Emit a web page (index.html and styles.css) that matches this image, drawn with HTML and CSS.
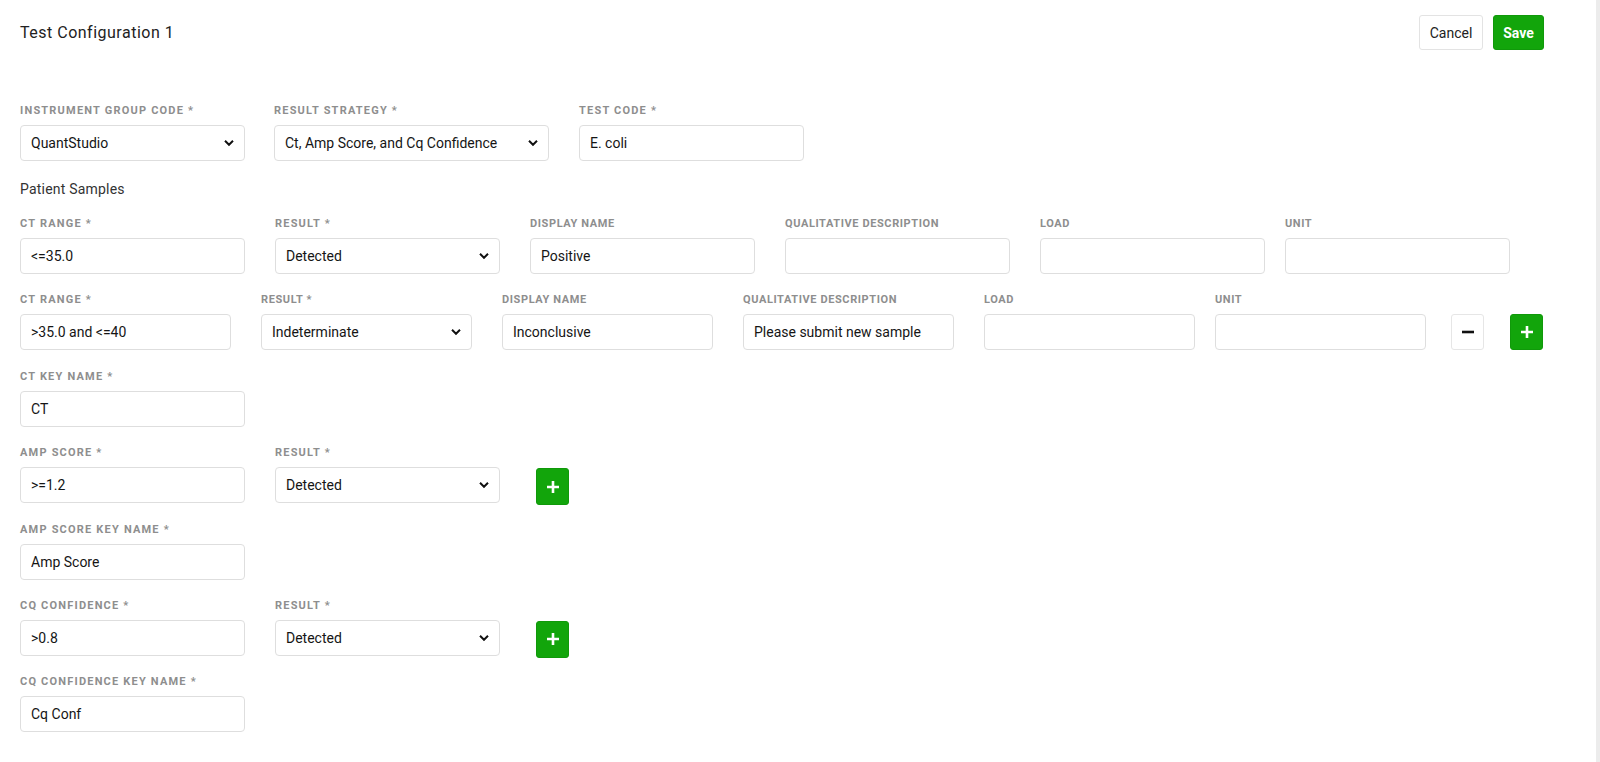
FILE: index.html
```html
<!DOCTYPE html>
<html lang="en">
<head>
    <meta charset="UTF-8">
    <meta name="viewport" content="width=device-width, initial-scale=1.0">
    <title>Test Configuration 1</title>
    <link rel="stylesheet" href="styles.css">
</head>
<body>
    <div class="layout">
        <main class="config">
            <header class="config-header">
                <h1 class="config-title">Test Configuration 1</h1>
                <div class="config-actions">
                    <button class="btn btn-cancel">Cancel</button>
                    <button class="btn btn-save">Save</button>
                </div>
            </header>

            <div class="form-row row-top">
                <div class="field">
                    <label class="field-label">Instrument Group Code *</label>
                    <div class="select-wrap">
                        <select class="field-input"><option>QuantStudio</option></select>
                        <svg class="chevron" width="10" height="7" viewBox="0 0 10 7"><path d="M1 1.3 L5 5.3 L9 1.3" fill="none" stroke="#111" stroke-width="2"/></svg>
                    </div>
                </div>
                <div class="field field-wide">
                    <label class="field-label">Result Strategy *</label>
                    <div class="select-wrap">
                        <select class="field-input"><option>Ct, Amp Score, and Cq Confidence</option></select>
                        <svg class="chevron" width="10" height="7" viewBox="0 0 10 7"><path d="M1 1.3 L5 5.3 L9 1.3" fill="none" stroke="#111" stroke-width="2"/></svg>
                    </div>
                </div>
                <div class="field">
                    <label class="field-label">Test Code *</label>
                    <input class="field-input" value="E. coli">
                </div>
            </div>

            <h2 class="section-title">Patient Samples</h2>

            <!-- sample row 1 -->
            <div class="form-row row-samples">
                <div class="field">
                    <label class="field-label">CT Range *</label>
                    <input class="field-input" value="&lt;=35.0">
                </div>
                <div class="field">
                    <label class="field-label">Result *</label>
                    <div class="select-wrap">
                        <select class="field-input"><option>Detected</option></select>
                        <svg class="chevron" width="10" height="7" viewBox="0 0 10 7"><path d="M1 1.3 L5 5.3 L9 1.3" fill="none" stroke="#111" stroke-width="2"/></svg>
                    </div>
                </div>
                <div class="field">
                    <label class="field-label tight">Display Name</label>
                    <input class="field-input" value="Positive">
                </div>
                <div class="field">
                    <label class="field-label tight">Qualitative Description</label>
                    <input class="field-input" value="">
                </div>
                <div class="field field-load">
                    <label class="field-label tight">Load</label>
                    <input class="field-input" value="">
                </div>
                <div class="field">
                    <label class="field-label tight">Unit</label>
                    <input class="field-input" value="">
                </div>
            </div>

            <!-- sample row 2 -->
            <div class="form-row row-narrow">
                <div class="field">
                    <label class="field-label">CT Range *</label>
                    <input class="field-input" value="&gt;35.0 and &lt;=40">
                </div>
                <div class="field">
                    <label class="field-label tight">Result *</label>
                    <div class="select-wrap">
                        <select class="field-input"><option>Indeterminate</option></select>
                        <svg class="chevron" width="10" height="7" viewBox="0 0 10 7"><path d="M1 1.3 L5 5.3 L9 1.3" fill="none" stroke="#111" stroke-width="2"/></svg>
                    </div>
                </div>
                <div class="field">
                    <label class="field-label tight">Display Name</label>
                    <input class="field-input" value="Inconclusive">
                </div>
                <div class="field">
                    <label class="field-label tight">Qualitative Description</label>
                    <input class="field-input" value="Please submit new sample">
                </div>
                <div class="field field-load">
                    <label class="field-label tight">Load</label>
                    <input class="field-input" value="">
                </div>
                <div class="field">
                    <label class="field-label tight">Unit</label>
                    <input class="field-input" value="">
                </div>
                <button class="icon-btn icon-btn-remove" aria-label="Remove row">
                    <svg width="12" height="12" viewBox="0 0 12 12"><path d="M0 6 H12" stroke="#111" stroke-width="2.6"/></svg>
                </button>
                <button class="icon-btn icon-btn-add icon-btn-last" aria-label="Add row">
                    <svg width="12" height="12" viewBox="0 0 12 12"><path d="M6 0 V12 M0 6 H12" stroke="#fff" stroke-width="2.6"/></svg>
                </button>
            </div>

            <div class="form-row">
                <div class="field">
                    <label class="field-label">CT Key Name *</label>
                    <input class="field-input" value="CT">
                </div>
            </div>

            <div class="form-row">
                <div class="field">
                    <label class="field-label">Amp Score *</label>
                    <input class="field-input" value="&gt;=1.2">
                </div>
                <div class="field">
                    <label class="field-label">Result *</label>
                    <div class="select-wrap">
                        <select class="field-input"><option>Detected</option></select>
                        <svg class="chevron" width="10" height="7" viewBox="0 0 10 7"><path d="M1 1.3 L5 5.3 L9 1.3" fill="none" stroke="#111" stroke-width="2"/></svg>
                    </div>
                </div>
                <button class="icon-btn icon-btn-add icon-btn-inline" aria-label="Add amp score">
                    <svg width="12" height="12" viewBox="0 0 12 12"><path d="M6 0 V12 M0 6 H12" stroke="#fff" stroke-width="2.6"/></svg>
                </button>
            </div>

            <div class="form-row">
                <div class="field">
                    <label class="field-label">Amp Score Key Name *</label>
                    <input class="field-input" value="Amp Score">
                </div>
            </div>

            <div class="form-row">
                <div class="field">
                    <label class="field-label">Cq Confidence *</label>
                    <input class="field-input" value="&gt;0.8">
                </div>
                <div class="field">
                    <label class="field-label">Result *</label>
                    <div class="select-wrap">
                        <select class="field-input"><option>Detected</option></select>
                        <svg class="chevron" width="10" height="7" viewBox="0 0 10 7"><path d="M1 1.3 L5 5.3 L9 1.3" fill="none" stroke="#111" stroke-width="2"/></svg>
                    </div>
                </div>
                <button class="icon-btn icon-btn-add icon-btn-inline" aria-label="Add cq confidence">
                    <svg width="12" height="12" viewBox="0 0 12 12"><path d="M6 0 V12 M0 6 H12" stroke="#fff" stroke-width="2.6"/></svg>
                </button>
            </div>

            <div class="form-row">
                <div class="field">
                    <label class="field-label">Cq Confidence Key Name *</label>
                    <input class="field-input" value="Cq Conf">
                </div>
            </div>
        </main>
        <div class="scroll-track"></div>
    </div>
</body>
</html>
```

FILE: styles.css
```css
* {
    margin: 0;
    padding: 0;
    box-sizing: border-box;
}

html, body {
    height: 100%;
    overflow: hidden;
}

body {
    font-family: Roboto, "Liberation Sans", sans-serif;
    background: #ffffff;
    color: #1a1a1a;
}

.layout {
    display: flex;
    height: 100vh;
}

.config {
    flex: 1;
    padding: 15px 52px 0 20px;
}

.scroll-track {
    width: 4px;
    background: #ececec;
}

/* header */
.config-header {
    display: flex;
    align-items: center;
    justify-content: space-between;
    height: 35px;
}

.config-title {
    font-size: 16px;
    font-weight: 400;
    color: #222;
    letter-spacing: 0.5px;
}

.config-actions {
    display: flex;
    gap: 10px;
}

.btn {
    height: 35px;
    border-radius: 3px;
    font-family: inherit;
    font-size: 14px;
    cursor: pointer;
}

.btn-cancel {
    width: 64px;
    background: #fff;
    border: 1px solid #e3e3e3;
    color: #222;
}

.btn-save {
    width: 51px;
    background: #12a50b;
    border: 1px solid #10990a;
    color: #fff;
    font-weight: 700;
}

/* form rows */
.form-row {
    display: flex;
    gap: 30px;
    margin-top: 19.4px;
}

.form-row.row-top {
    margin-top: 54px;
    gap: 29px;
}

.row-top .field-wide {
    width: 275px;
    margin-right: 1px;
}

.row-samples {
    margin-top: 18px;
}

.section-title {
    margin-top: 18px;
    font-size: 14px;
    font-weight: 400;
    line-height: 20px;
    color: #333;
    letter-spacing: 0.2px;
}

.field {
    display: flex;
    flex-direction: column;
    width: 225px;
}

.row-narrow .field {
    width: 211px;
}

.field-load {
    margin-right: -10px;
}

.field-label {
    font-size: 11px;
    font-weight: 700;
    line-height: 14px;
    letter-spacing: 1.2px;
    text-transform: uppercase;
    color: #8e8e8e;
    margin-bottom: 7px;
    white-space: nowrap;
}

.field-label.tight {
    letter-spacing: 0.6px;
}

.field-input {
    width: 100%;
    height: 36px;
    padding: 0 10px;
    border: 1px solid #dedede;
    border-radius: 4px;
    background: #fff;
    font-family: inherit;
    font-size: 14px;
    color: #151515;
    outline: none;
}

.select-wrap {
    position: relative;
}

.select-wrap select {
    appearance: none;
    -webkit-appearance: none;
    padding-right: 28px;
}

.chevron {
    position: absolute;
    right: 11px;
    top: 50%;
    transform: translateY(-50%);
    pointer-events: none;
}

/* square icon buttons */
.icon-btn {
    align-self: flex-end;
    display: flex;
    align-items: center;
    justify-content: center;
    width: 33px;
    height: 36px;
    border-radius: 3px;
    cursor: pointer;
}

.icon-btn-add {
    background: #12a50b;
    border: 1px solid #10990a;
}

.icon-btn-remove {
    background: #fff;
    border: 1px solid #e6e6e6;
    margin-left: -5px;
}

.icon-btn-last {
    margin-left: -4px;
}

.icon-btn-inline {
    height: 37px;
    margin-left: 6px;
    margin-bottom: -2px;
}
```
